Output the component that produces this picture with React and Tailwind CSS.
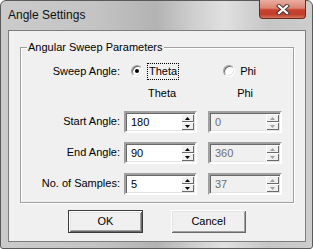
import React from "react";

function Arrow({ up, disabled }) {
  return (
    <svg width="5" height="3" viewBox="0 0 5 3" className="block">
      {up ? (
        <polygon points="2.5,0 5,3 0,3" fill={disabled ? "#a0a0a0" : "#000"} />
      ) : (
        <polygon points="0,0 5,0 2.5,3" fill={disabled ? "#a0a0a0" : "#000"} />
      )}
    </svg>
  );
}

function SpinBox({ value, disabled, width }) {
  return (
    <div
      className={`h-[22px] flex items-stretch border-2 border-t-[#a0a0a0] border-l-[#a0a0a0] border-r-white border-b-white shadow-[inset_1px_1px_0_#696969,inset_-1px_-1px_0_#e3e3e3] ${
        disabled ? "bg-[#f0f0f0] text-[#6d6d6d]" : "bg-white text-black"
      } ${width}`}
    >
      <div className="flex-1 flex items-center pl-[5px] pt-[1px]">{value}</div>
      <div className="w-[14px] flex flex-col py-[1px] pr-[1px]">
        <div className="h-[9px] flex items-center justify-center bg-[#f0f0f0] shadow-[inset_1px_1px_0_#fff,inset_-1px_-1px_0_#696969]">
          <Arrow up disabled={disabled} />
        </div>
        <div className="h-[9px] flex items-center justify-center bg-[#f0f0f0] shadow-[inset_1px_1px_0_#fff,inset_-1px_-1px_0_#696969]">
          <Arrow disabled={disabled} />
        </div>
      </div>
    </div>
  );
}

function Radio({ checked }) {
  return (
    <div className="w-[12px] h-[12px] rounded-full bg-white flex items-center justify-center border border-t-[#a0a0a0] border-l-[#a0a0a0] border-r-white border-b-white shadow-[inset_1px_1px_0_#696969,inset_-1px_-1px_0_#e3e3e3]">
      {checked && <div className="w-[4px] h-[4px] rounded-full bg-black" />}
    </div>
  );
}

function Row({ label, theta, phi }) {
  return (
    <div className="flex items-center mt-[9px] first:mt-[4px]">
      <div className="w-[99px] text-right pb-[2px]">{label}</div>
      <div className="ml-[4px]">
        <SpinBox value={theta} width="w-[73px]" />
      </div>
      <div className="ml-[11px]">
        <SpinBox value={phi} width="w-[74px]" disabled />
      </div>
    </div>
  );
}

export default function App() {
  return (
    <div className="w-[313px] h-[249px] bg-white font-['Liberation_Sans',Arial,sans-serif] text-[11px] leading-[13px] text-black">
      <div className="w-full h-full flex flex-col rounded-t-[6px] rounded-b-[3px] border border-[#5a5a5a] bg-[linear-gradient(90deg,#cbcbcb_0%,#c4c4c4_30%,#b3b3b3_50%,#cfcfcf_62%,#e0e0e0_72%,#c6c6c6_86%,#cdcdcd_100%)] pl-[7px] pr-[6px] pb-[6px]">
        {/* title bar */}
        <div className="h-[29px] flex justify-between items-start">
          <div className="mt-[6px] text-[12px] leading-[16px] text-[#111]">Angle Settings</div>
          <div className="-mt-[1px] w-[47px] h-[19px] rounded-b-[4px] border border-t-0 border-[#6b2a20] bg-[linear-gradient(180deg,#e9ad9f_0%,#dc8472_45%,#c7432f_55%,#c13e2a_80%,#d2735f_100%)] flex items-center justify-center">
            <svg width="14" height="11" viewBox="0 0 14 11">
              <path d="M3 2 L11 9 M11 2 L3 9" stroke="#4a3a38" strokeWidth="4.2" strokeLinecap="square" />
              <path d="M3 2 L11 9 M11 2 L3 9" stroke="#fff" strokeWidth="2.2" strokeLinecap="square" />
            </svg>
          </div>
        </div>

        {/* client area */}
        <div className="flex-1 flex flex-col border border-[#7d7d7d] bg-[#f0f0f0]">
          {/* group box */}
          <div className="relative mt-[16px] mx-[11px] h-[156px] border border-[#a0a0a0] shadow-[inset_1px_1px_0_#fff,1px_1px_0_#fff]">
            <span className="absolute -top-[7px] left-[6px] px-[1px] bg-[#f0f0f0]">
              Angular Sweep Parameters
            </span>

            <div className="mt-[14px] h-[18px] flex items-center">
              <div className="w-[99px] text-right">Sweep Angle:</div>
              <div className="ml-[11px]">
                <Radio checked />
              </div>
              <span className="ml-[4px] px-[1px] border border-dotted border-black leading-[15px]">Theta</span>
              <div className="ml-[44px]">
                <Radio />
              </div>
              <span className="ml-[5px]">Phi</span>
            </div>

            <div className="mt-[4px] h-[18px] flex items-center">
              <span className="ml-[127px]">Theta</span>
              <span className="ml-[61px]">Phi</span>
            </div>

            <Row label="Start Angle:" theta="180" phi="0" />
            <Row label="End Angle:" theta="90" phi="360" />
            <Row label="No. of Samples:" theta="5" phi="37" />
          </div>

          {/* buttons */}
          <div className="mt-[7px] flex justify-center gap-[28px]">
            <button className="w-[75px] h-[23px] bg-[#f0f0f0] border border-[#3c3c3c] shadow-[inset_1px_1px_0_#fff,inset_-1px_-1px_0_#696969,inset_2px_2px_0_#e3e3e3,inset_-2px_-2px_0_#a0a0a0]">
              OK
            </button>
            <button className="w-[75px] h-[23px] bg-[#f0f0f0] shadow-[inset_1px_1px_0_#fff,inset_-1px_-1px_0_#696969,inset_2px_2px_0_#e3e3e3,inset_-2px_-2px_0_#a0a0a0]">
              Cancel
            </button>
          </div>
        </div>
      </div>
    </div>
  );
}
